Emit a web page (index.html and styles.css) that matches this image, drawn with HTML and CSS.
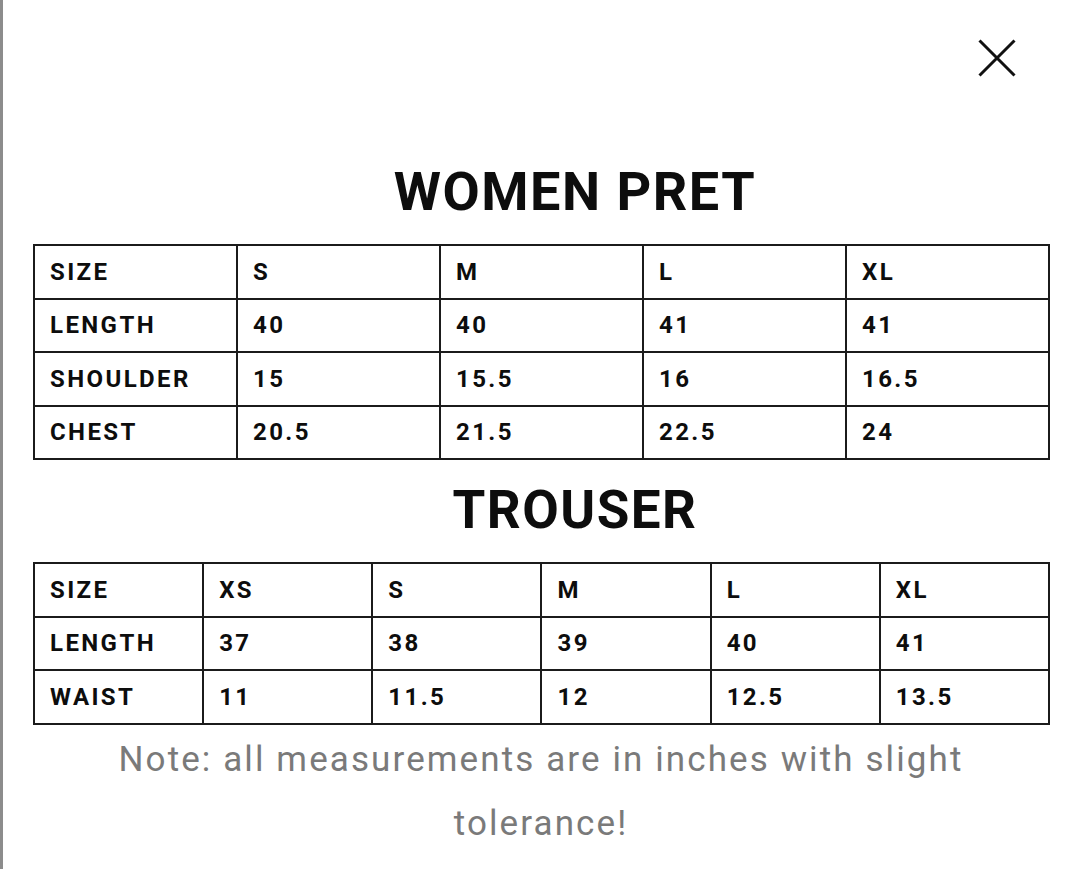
FILE: index.html
```html
<!DOCTYPE html>
<html lang="en">
<head>
<meta charset="utf-8">
<title>Size Chart</title>
<link rel="stylesheet" href="styles.css">
</head>
<body>
<div class="page">
  <div class="topbar">
    <button class="close" aria-label="Close">
      <svg width="38" height="38" viewBox="0 0 38 38"><path d="M1.5 1.5 L36.5 36.5 M36.5 1.5 L1.5 36.5" stroke="#111" stroke-width="3" fill="none"/></svg>
    </button>
  </div>
  <h2 class="title title-first">WOMEN PRET</h2>
  <table class="chart">
    <tr><td>SIZE</td><td>S</td><td>M</td><td>L</td><td>XL</td></tr>
    <tr><td>LENGTH</td><td>40</td><td>40</td><td>41</td><td>41</td></tr>
    <tr><td>SHOULDER</td><td>15</td><td>15.5</td><td>16</td><td>16.5</td></tr>
    <tr><td>CHEST</td><td>20.5</td><td>21.5</td><td>22.5</td><td>24</td></tr>
  </table>
  <h2 class="title title-second">TROUSER</h2>
  <table class="chart">
    <tr><td>SIZE</td><td>XS</td><td>S</td><td>M</td><td>L</td><td>XL</td></tr>
    <tr><td>LENGTH</td><td>37</td><td>38</td><td>39</td><td>40</td><td>41</td></tr>
    <tr><td>WAIST</td><td>11</td><td>11.5</td><td>12</td><td>12.5</td><td>13.5</td></tr>
  </table>
  <p class="note">Note: all measurements are in inches with slight tolerance!</p>
</div>
</body>
</html>
```
FILE: styles.css
```css
html, body {
  margin: 0;
  padding: 0;
  background: #fff;
}
body {
  font-family: Roboto, "Liberation Sans", sans-serif;
  color: #111;
}
.page {
  box-sizing: border-box;
  min-height: 869px;
  border-left: 3px solid #8c8c8c;
  padding: 39px 31px 0 30px;
  display: flex;
  flex-direction: column;
}
.topbar {
  display: flex;
  justify-content: flex-end;
  padding-right: 33px;
  height: 38px;
}
.close {
  border: 0;
  background: none;
  padding: 0;
  width: 38px;
  height: 38px;
  cursor: pointer;
}
.close svg { display: block; }
.title {
  margin: 0;
  padding-left: 68px;
  text-align: center;
  font-weight: 700;
  color: #0d0d0d;
  line-height: 64px;
  letter-spacing: 1.5px;
}
.title-first {
  margin-top: 83px;
  font-size: 54px;
}
.title-second {
  margin-top: 18px;
  font-size: 53px;
}
.chart {
  margin-top: 20px;
  width: 1017px;
  border-collapse: collapse;
  table-layout: fixed;
}
.title-second + .chart { margin-top: 20px; }
.chart td {
  border: 2px solid #1b1b1b;
  height: 51px;
  padding: 0 0 0 15px;
  font-size: 24px;
  font-weight: 700;
  letter-spacing: 2.4px;
  vertical-align: middle;
  color: #0d0d0d;
}
.chart tr { height: 53.5px; }
.note {
  margin: 3px auto 0;
  max-width: 900px;
  text-align: center;
  font-size: 35px;
  line-height: 64px;
  letter-spacing: 2.1px;
  color: #7a7a7a;
}
```
